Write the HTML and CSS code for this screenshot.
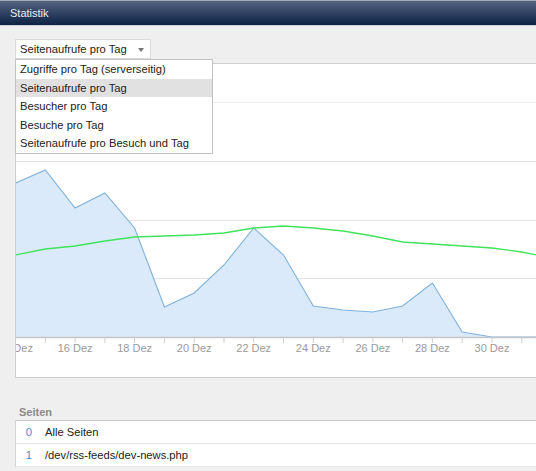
FILE: index.html
```html
<!DOCTYPE html>
<html lang="de">
<head>
<meta charset="utf-8">
<title>Statistik</title>
<link rel="stylesheet" href="styles.css">
</head>
<body>
<div class="header">Statistik</div>
<div class="content">
  <div class="picker">
    <div class="select">Seitenaufrufe pro Tag<span class="arrow"></span></div>
    <ul class="menu">
      <li>Zugriffe pro Tag (serverseitig)</li>
      <li class="active">Seitenaufrufe pro Tag</li>
      <li>Besucher pro Tag</li>
      <li>Besuche pro Tag</li>
      <li>Seitenaufrufe pro Besuch und Tag</li>
    </ul>
  </div>
  <div class="panel">
    <div class="panel-head"></div>
    <svg class="chart" width="530" height="274" viewBox="16 104 530 274">
      <g class="grid">
        <line x1="0" y1="162.5" x2="560" y2="162.5"/>
        <line x1="0" y1="221.5" x2="560" y2="221.5"/>
        <line x1="0" y1="279.5" x2="560" y2="279.5"/>
      </g>
      <path class="area" d="M15.5,184 L45.3,171 L75.1,209 L104.8,194 L134.6,229 L164.4,308 L194.2,294 L224,266 L253.7,229 L283.5,256 L313.3,307 L343.1,311 L372.9,313 L402.6,307 L432.4,284 L462.2,333 L492,338 L560,338 L560,338 L15.5,338 Z"/>
      <path class="blue" d="M15.5,184 L45.3,171 L75.1,209 L104.8,194 L134.6,229 L164.4,308 L194.2,294 L224,266 L253.7,229 L283.5,256 L313.3,307 L343.1,311 L372.9,313 L402.6,307 L432.4,284 L462.2,333 L492,338 L560,338"/>
      <path class="green" d="M15.5,256 L45.3,250 L75.1,247 L104.8,242 L134.6,238 L164.4,237 L194.2,236 L224,234 L253.7,229 L283.5,227 L313.3,229 L343.1,232 L372.9,237 L402.6,243 L432.4,245 L462.2,247 L492,249 L521.8,253 L551.6,259"/>
      <line class="axis" x1="0" y1="338.5" x2="560" y2="338.5"/>
      <g class="ticks">
        <line x1="15.5" y1="339" x2="15.5" y2="344"/>
        <line x1="45.3" y1="339" x2="45.3" y2="344"/>
        <line x1="75.1" y1="339" x2="75.1" y2="344"/>
        <line x1="104.8" y1="339" x2="104.8" y2="344"/>
        <line x1="134.6" y1="339" x2="134.6" y2="344"/>
        <line x1="164.4" y1="339" x2="164.4" y2="344"/>
        <line x1="194.2" y1="339" x2="194.2" y2="344"/>
        <line x1="224" y1="339" x2="224" y2="344"/>
        <line x1="253.7" y1="339" x2="253.7" y2="344"/>
        <line x1="283.5" y1="339" x2="283.5" y2="344"/>
        <line x1="313.3" y1="339" x2="313.3" y2="344"/>
        <line x1="343.1" y1="339" x2="343.1" y2="344"/>
        <line x1="372.9" y1="339" x2="372.9" y2="344"/>
        <line x1="402.6" y1="339" x2="402.6" y2="344"/>
        <line x1="432.4" y1="339" x2="432.4" y2="344"/>
        <line x1="462.2" y1="339" x2="462.2" y2="344"/>
        <line x1="492" y1="339" x2="492" y2="344"/>
        <line x1="521.8" y1="339" x2="521.8" y2="344"/>
      </g>
      <g class="labels">
        <text x="15.5" y="353">14 Dez</text>
        <text x="75.1" y="353">16 Dez</text>
        <text x="134.6" y="353">18 Dez</text>
        <text x="194.2" y="353">20 Dez</text>
        <text x="253.7" y="353">22 Dez</text>
        <text x="313.3" y="353">24 Dez</text>
        <text x="372.9" y="353">26 Dez</text>
        <text x="432.4" y="353">28 Dez</text>
        <text x="492" y="353">30 Dez</text>
      </g>
    </svg>
  </div>
  <div class="section-title">Seiten</div>
  <div class="table">
    <div class="row"><span class="num">0</span><span class="path">Alle Seiten</span></div>
    <div class="row"><span class="num">1</span><span class="path">/dev/rss-feeds/dev-news.php</span></div>
  </div>
</div>
</body>
</html>
```

FILE: styles.css
```css
html, body {
  margin: 0;
  padding: 0;
  overflow: hidden;
  background: #efefef;
  font-family: "Liberation Sans", Arial, sans-serif;
  font-size: 11.2px;
  color: #222;
}

.header {
  height: 24px;
  line-height: 24px;
  border-top: 1px solid #a3abb8;
  border-bottom: 1px solid #cfcfcf;
  background: linear-gradient(to bottom, #56647f 0%, #2f4262 50%, #0d2244 100%);
  color: #e9edf3;
  font-size: 11px;
  padding-left: 10px;
}

.content {
  padding-left: 15px;
}

.picker {
  position: relative;
  padding-top: 13px;
}

.select {
  position: relative;
  width: 130px;
  height: 18px;
  line-height: 18px;
  border: 1px solid #dadada;
  background: #fff;
  padding-left: 4px;
}

.arrow {
  position: absolute;
  right: 6px;
  top: 8px;
  width: 0;
  height: 0;
  border-left: 3.5px solid transparent;
  border-right: 3.5px solid transparent;
  border-top: 4px solid #777;
}

.menu {
  position: absolute;
  z-index: 2;
  top: 33px;
  left: 0;
  width: 196px;
  margin: 0;
  padding: 0;
  list-style: none;
  background: #fff;
  border: 1px solid #c2c2c2;
}

.menu li {
  height: 18.6px;
  line-height: 18.6px;
  padding-left: 4px;
}

.menu li.active {
  background: #e1e1e1;
}

.panel {
  margin-top: 4px;
  margin-right: -20px;
  background: #fff;
  border-top: 1px solid #cdcdcd;
  border-left: 1px solid #cdcdcd;
  border-bottom: 1px solid #cdcdcd;
}

.panel-head {
  height: 38px;
  border-bottom: 1px solid #ececec;
}

.chart {
  display: block;
}

.grid line {
  stroke: #e3e3e3;
  stroke-width: 1;
}

.area {
  fill: #dbeafb;
  stroke: none;
}

.blue {
  fill: none;
  stroke: #7eb1dd;
  stroke-width: 1.1;
}

.green {
  fill: none;
  stroke: #3fe35c;
  stroke-width: 1.4;
}

.axis {
  stroke: #c6c6c6;
  stroke-width: 1.6;
}

.ticks line {
  stroke: #cfcfcf;
  stroke-width: 1;
}

.labels text {
  font-family: "Liberation Sans", Arial, sans-serif;
  font-size: 11px;
  fill: #9a9a9a;
  text-anchor: middle;
}

.section-title {
  margin-top: 27px;
  height: 15px;
  line-height: 15px;
  padding-left: 4px;
  font-weight: bold;
  color: #8a8a8a;
  font-size: 11px;
}

.table {
  margin-right: -20px;
  background: #fff;
  border-top: 1px solid #c6c6c6;
  border-left: 1px solid #d6d6d6;
}

.row {
  display: flex;
  height: 22px;
  line-height: 22px;
  border-bottom: 1px solid #e9e9e9;
}

.num {
  width: 16px;
  text-align: right;
  color: #3a8fd0;
}

.path {
  margin-left: 13px;
}
```
